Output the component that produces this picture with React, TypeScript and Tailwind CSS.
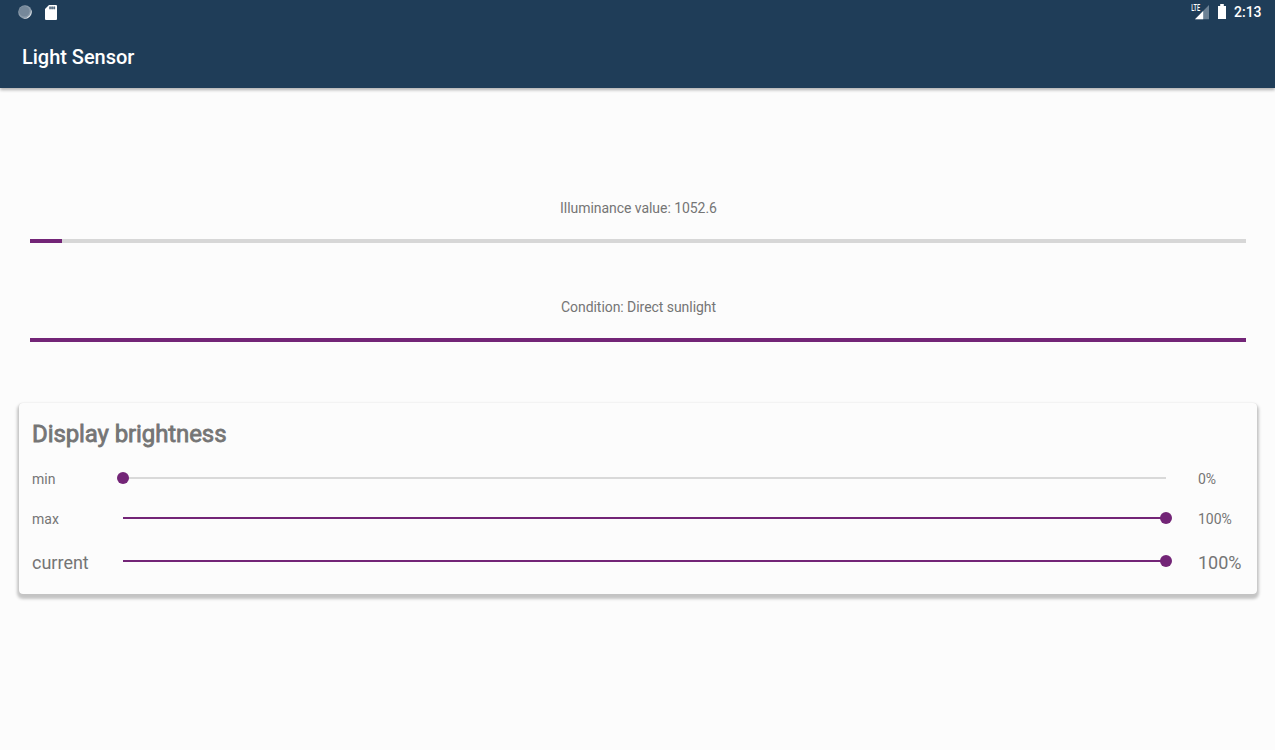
function Slider({ full = false }: { full?: boolean }) {
  return (
    <div className={`relative h-[2px] w-[1043px] ${full ? "bg-[#732577]" : "bg-[#d9d9d9]"}`}>
      <div className={`absolute -top-[5px] h-3 w-3 rounded-full bg-[#732577] ${full ? "-right-1.5" : "-left-1.5"}`} />
    </div>
  );
}

export default function App() {
  return (
    <div className="h-[750px] w-[1275px] overflow-hidden bg-[#fcfcfc] font-['Roboto',sans-serif] text-[14px] text-[#757575]">
      <header className="h-[88px] bg-[#1f3d58] text-white shadow-[0_2px_3px_rgba(0,0,0,0.3)]">
        <div className="flex h-6 items-center pl-[18px] pr-[13px]">
          <svg width="14" height="14" viewBox="0 0 14 14">
            <circle cx="7" cy="7" r="6.8" fill="#8d9dac" />
            <circle cx="6.3" cy="6.2" r="5.3" fill="#75889a" />
            <path d="M13.2 4.5A7 7 0 0 1 5 13.6Q9.5 13.2 11.5 10.5Q13.2 8 13.2 4.5z" fill="#e4e8eb" />
          </svg>
          <svg className="ml-[13px]" width="12" height="15" viewBox="0 0 12 15">
            <path d="M4 0h7q1 0 1 1v13q0 1-1 1H1q-1 0-1-1V4z" fill="#fff" />
            <path d="M4.2 1.6h6v2.6h-6z" fill="#8293a2" />
            <path d="M5 1.6v2.6M7.2 1.6v2.6M9.4 1.6v2.6" stroke="#4c657b" strokeWidth="1" />
          </svg>
          <svg className="ml-auto" width="19" height="16" viewBox="0 0 19 16">
            <path d="M4 15.3L18 1v14.3z" fill="#6d8295" />
            <path d="M4 15.3L12.2 7v8.3z" fill="#fff" />
            <path d="M0 0h9.6v8H0z" fill="#1f3d58" />
            <text transform="translate(0.2 7.3) scale(0.62 1)" fill="#fff" fontSize="9" fontWeight="500">LTE</text>
          </svg>
          <svg className="-mt-[2px] ml-2" width="8" height="15" viewBox="0 0 8 15"><path d="M2.2 0h3.6v2H8v13H0V2h2.2z" fill="#fff" /></svg>
          <span className="ml-2 w-7 whitespace-nowrap font-medium">2:13</span>
        </div>
        <h1 className="ml-[22px] mt-[18px] text-[20px] font-medium leading-[30px] tracking-[-0.03px]">Light Sensor</h1>
      </header>
      <main>
        <div className="ml-[30px] w-[1216px] pt-[110px]">
          <p className="pl-px text-center leading-5 tracking-[-0.05px]">Illuminance value: 1052.6</p>
          <div className="mt-[21px] h-1 bg-[#d7d7d7]"><div className="h-1 w-8 bg-[#732577]" /></div>
          <p className="mt-[54px] pl-px text-center leading-5 tracking-[-0.05px]">Condition: Direct sunlight</p>
          <div className="mt-[21px] h-1 bg-[#732577]" />
        </div>
        <section className="ml-[19px] mt-[61px] h-[191px] w-[1238px] rounded-[4px] bg-[#fcfcfc] pl-[13px] pt-[13px] shadow-[0_3px_3px_2px_rgba(0,0,0,0.22),0_0_1px_rgba(0,0,0,0.1)]">
          <h2 className="text-[24px] font-normal leading-9 tracking-[-0.1px] [-webkit-text-stroke:0.8px_#757575]">Display brightness</h2>
          <div className="mt-[6px] flex h-10 items-center"><span className="w-[91px] pt-0.5">min</span><Slider /><span className="ml-8 pt-0.5">0%</span></div>
          <div className="flex h-10 items-center"><span className="w-[91px] pt-0.5">max</span><Slider full /><span className="ml-8 pt-0.5">100%</span></div>
          <div className="flex h-[46px] items-center text-[18px]"><span className="w-[91px] pt-0.5">current</span><Slider full /><span className="ml-8 pt-0.5">100%</span></div>
        </section>
      </main>
    </div>
  );
}
